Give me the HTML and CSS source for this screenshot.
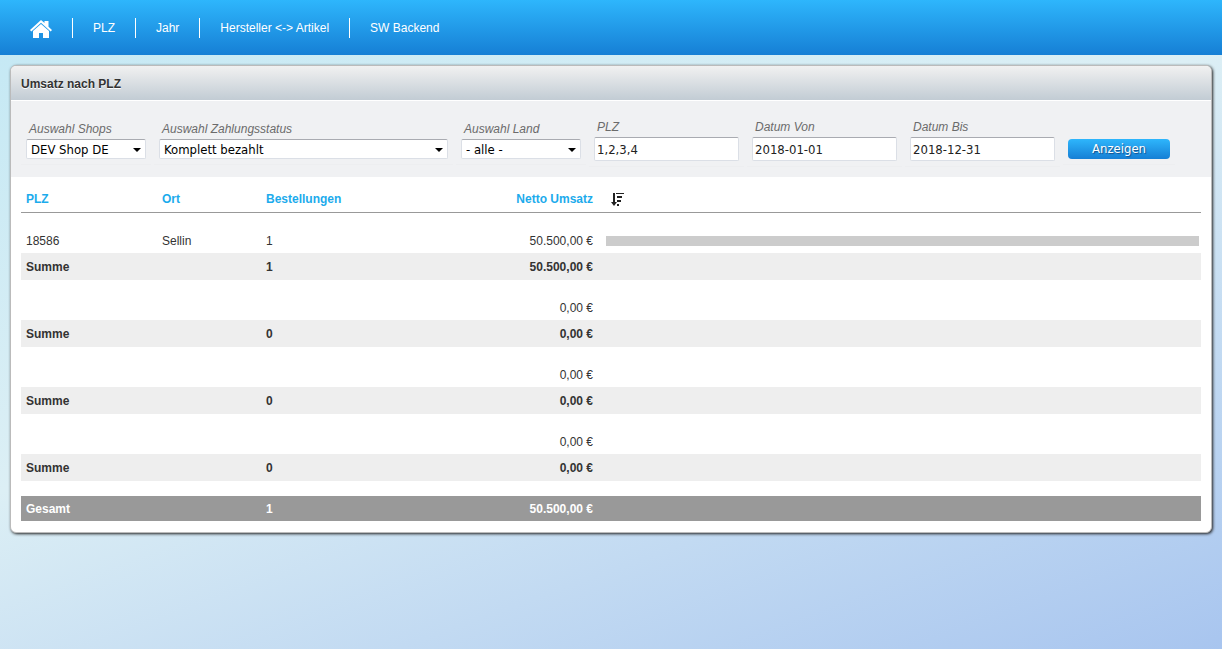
FILE: index.html
```html
<!DOCTYPE html>
<html lang="de">
<head>
<meta charset="utf-8">
<title>Umsatz nach PLZ</title>
<link rel="stylesheet" href="styles.css">
</head>
<body>
<nav class="nav">
  <a class="nav-home" href="#" aria-label="Startseite"><svg width="22" height="18" viewBox="0 0 22 18" fill="#fff" aria-hidden="true"><path d="M11 0 14.500 3.100V1h4v5.700L22 10l-1.300 1.400L11 2.700 1.300 11.400 0 10Z"/><path d="M11 4 3 11V18h6v-5h4v5h6v-7Z"/></svg></a>
  <a class="nav-link" href="#">PLZ</a>
  <a class="nav-link" href="#">Jahr</a>
  <a class="nav-link" href="#">Hersteller &lt;-&gt; Artikel</a>
  <a class="nav-link" href="#">SW Backend</a>
</nav>
<main class="panel">
  <h1 class="panel-title">Umsatz nach PLZ</h1>
  <form class="filters">
    <div class="field">
      <label for="shop">Auswahl Shops</label>
      <div class="select"><select id="shop"><option>DEV Shop DE</option></select></div>
    </div>
    <div class="field field-wide">
      <label for="status">Auswahl Zahlungsstatus</label>
      <div class="select"><select id="status"><option>Komplett bezahlt</option></select></div>
    </div>
    <div class="field">
      <label for="land">Auswahl Land</label>
      <div class="select"><select id="land"><option>- alle -</option></select></div>
    </div>
    <div class="field field-text">
      <label for="plz">PLZ</label>
      <input id="plz" type="text" value="1,2,3,4">
    </div>
    <div class="field field-text">
      <label for="von">Datum Von</label>
      <input id="von" type="text" value="2018-01-01">
    </div>
    <div class="field field-text">
      <label for="bis">Datum Bis</label>
      <input id="bis" type="text" value="2018-12-31">
    </div>
    <div class="field field-action">
      <button type="button">Anzeigen</button>
    </div>
  </form>
  <div class="report">
    <table>
      <colgroup><col class="c-plz"><col class="c-ort"><col class="c-best"><col class="c-netto"><col></colgroup>
      <thead>
        <tr><th>PLZ</th><th>Ort</th><th>Bestellungen</th><th class="num">Netto Umsatz</th><th><svg class="sort" width="14" height="13" viewBox="0 0 14 13" fill="#222" role="img" aria-label="Absteigend sortiert"><path d="M2 0h2v9h2L3 13 0 9h2ZM5 0h8v1H5ZM6 3h5v2H6ZM6 7h4v2H6ZM6 11h2v2H6Z"/></svg></th></tr>
      </thead>
      <tbody>
        <tr class="gap gap-large"><td colspan="5"></td></tr>
        <tr class="row"><td>18586</td><td>Sellin</td><td>1</td><td class="num">50.500,00 €</td><td class="bar-cell"><div class="bar" style="width:100%"></div></td></tr>
        <tr class="sum"><td>Summe</td><td></td><td>1</td><td class="num">50.500,00 €</td><td></td></tr>
      </tbody>
      <tbody>
        <tr class="gap"><td colspan="5"></td></tr>
        <tr class="row"><td></td><td></td><td></td><td class="num">0,00 €</td><td></td></tr>
        <tr class="sum"><td>Summe</td><td></td><td>0</td><td class="num">0,00 €</td><td></td></tr>
      </tbody>
      <tbody>
        <tr class="gap"><td colspan="5"></td></tr>
        <tr class="row"><td></td><td></td><td></td><td class="num">0,00 €</td><td></td></tr>
        <tr class="sum"><td>Summe</td><td></td><td>0</td><td class="num">0,00 €</td><td></td></tr>
      </tbody>
      <tbody>
        <tr class="gap"><td colspan="5"></td></tr>
        <tr class="row"><td></td><td></td><td></td><td class="num">0,00 €</td><td></td></tr>
        <tr class="sum"><td>Summe</td><td></td><td>0</td><td class="num">0,00 €</td><td></td></tr>
      </tbody>
      <tfoot>
        <tr class="gap gap-large"><td colspan="5"></td></tr>
        <tr class="total"><td>Gesamt</td><td></td><td>1</td><td class="num">50.500,00 €</td><td></td></tr>
      </tfoot>
    </table>
  </div>
</main>
</body>
</html>
```
FILE: styles.css
```css
* { box-sizing: border-box; }

html { min-height: 100%; background: linear-gradient(160deg, #c3e8f4 0%, #dceff5 45%, #a8c5ef 100%); }

body {
  margin: 0;
  padding-bottom: 10px;
  color: #333;
  font: 12px/16px "Liberation Sans", Arial, sans-serif;
}

.nav {
  display: flex;
  align-items: center;
  height: 55px;
  padding-left: 30px;
  background: linear-gradient(#2eb6fc, #167fd5);
}
.nav-home { display: flex; margin-right: 20px; padding-top: 2px; }
.nav-link {
  padding: 0 20px;
  border-left: 1px solid #fff;
  color: #fff;
  line-height: 20px;
  text-decoration: none;
}

.panel {
  margin: 10px 10px 0;
  overflow: hidden;
  border: 1px solid #bbb;
  border-radius: 6px;
  background: #fff;
  box-shadow: 1px 1px 3px #222;
}
.panel-title {
  margin: 0;
  padding: 10px 10px 7px;
  border-bottom: 1px solid #fff;
  background: linear-gradient(#f1f1f1, #c2ccd4);
  font-size: 12px;
  line-height: 17px;
  text-shadow: 0 1px 0 #fff;
}

.filters {
  display: flex;
  flex-wrap: wrap;
  align-items: center;
  gap: 3px;
  padding: 17px 10px 10px;
  background: #f0f1f3;
}
.field {
  width: 130px;
  padding: 0 5px 5px;
  border-bottom: 1px solid #edeef0;
}
.field-wide { width: 299px; }
.field-text { width: 155px; }
.field-action { width: 112px; padding-top: 19px; }
.field label {
  display: block;
  margin-bottom: 2px;
  padding: 1px 0 0 3px;
  color: #6b6b6b;
  font-style: italic;
}

.select { position: relative; }
.select::after {
  content: "";
  position: absolute;
  top: 9px;
  right: 5px;
  border: 4px solid transparent;
  border-top-color: #000;
  border-bottom: 0;
  pointer-events: none;
}
select, input {
  display: block;
  width: 100%;
  border: 1px solid #dbdfe6;
  border-top-color: #a9abb1;
  border-radius: 2px;
  background: #fff;
  color: #000;
  font: 13px/16px "DejaVu Sans Condensed", "DejaVu Sans", sans-serif;
}
select { appearance: none; height: 20px; padding: 1px 4px 0; }
input { height: 24px; padding: 1px 2px 0; color: #222; }

button {
  display: block;
  width: 100%;
  height: 20px;
  padding: 0;
  border: 0;
  border-radius: 4px;
  background: linear-gradient(#2eb6fc, #167fd5);
  color: #fff;
  font: 13px/20px "DejaVu Sans Condensed", "DejaVu Sans", sans-serif;
  text-shadow: 1px 1px 1px #14508a;
}

.report { padding: 10px 10px 11px; }
table {
  width: 100%;
  border-collapse: collapse;
  table-layout: fixed;
}
.c-plz { width: 136px; }
.c-ort { width: 104px; }
.c-best { width: 208px; }
.c-netto { width: 130px; }
th, td { height: 26px; padding: 0 5px; text-align: left; }
th {
  height: 25px;
  border-bottom: 1px solid #999;
  color: #1cabec;
}
.num { padding-right: 6px; text-align: right; }
th svg { display: block; margin-left: 7px; }
.row td { padding-top: 2px; }
.gap td { height: 14px; padding: 0; }
.gap-large td { height: 15px; }
.row .bar-cell { padding: 2px 2px 0 7px; }
.bar { height: 10px; background: #ccc; }
.sum td { height: 27px; background: #eee; font-weight: bold; }
.total td { height: 25px; background: #999; color: #fff; font-weight: bold; }
```
